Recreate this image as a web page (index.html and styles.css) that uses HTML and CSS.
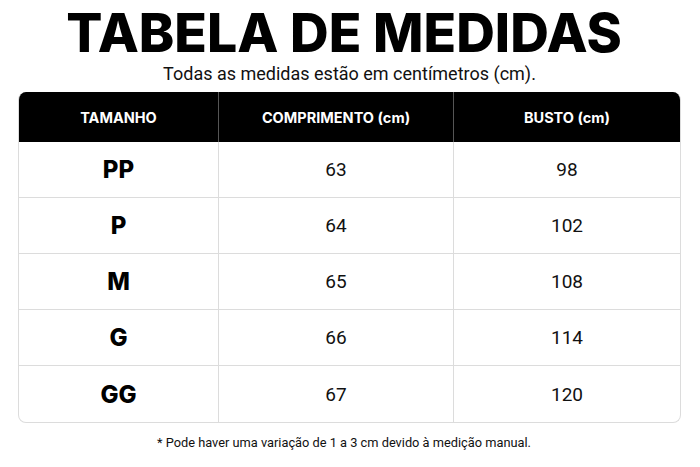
FILE: index.html
```html
<!DOCTYPE html>
<html lang="pt">
<head>
<meta charset="utf-8">
<link rel="stylesheet" href="styles.css">
</head>
<body>
<main class="page">
  <h1 class="title">TABELA DE MEDIDAS</h1>
  <p class="subtitle">Todas as medidas estão em centímetros (cm).</p>
  <div class="table">
    <div class="head">TAMANHO</div>
    <div class="head">COMPRIMENTO (cm)</div>
    <div class="head">BUSTO (cm)</div>

    <div class="cell size">PP</div><div class="cell">63</div><div class="cell">98</div>
    <div class="cell size">P</div><div class="cell">64</div><div class="cell">102</div>
    <div class="cell size">M</div><div class="cell">65</div><div class="cell">108</div>
    <div class="cell size">G</div><div class="cell">66</div><div class="cell">114</div>
    <div class="cell size last">GG</div><div class="cell last">67</div><div class="cell last">120</div>
  </div>
  <p class="note">* Pode haver uma variação de 1 a 3 cm devido à medição manual.</p>
</main>
</body>
</html>
```
FILE: styles.css
```css
html, body {
  margin: 0;
  padding: 0;
  background: #ffffff;
}
.page {
  width: 700px;
  height: 467px;
  padding: 6px 19px 0 18px;
  box-sizing: border-box;
  display: flex;
  flex-direction: column;
  align-items: stretch;
  color: #000;
}
.title {
  margin: 0 11px 0 0;
  font-family: Inter, "Noto Sans", sans-serif;
  font-weight: 800;
  font-size: 53.5px;
  line-height: 54px;
  text-align: center;
  letter-spacing: 0;
}
.subtitle {
  margin: 3px 0 0;
  font-family: Roboto, sans-serif;
  font-size: 18px;
  line-height: 22px;
  text-align: center;
  color: #111;
}
.table {
  margin-top: 7px;
  display: grid;
  grid-template-columns: 200px 235px 1fr;
  grid-template-rows: 50px repeat(5, 56px);
  border: 1px solid #dcdcdc;
  border-top: none;
  border-radius: 8px;
  overflow: hidden;
}
.head {
  background: #000;
  color: #fff;
  font-family: Inter, sans-serif;
  font-weight: 700;
  font-size: 14.5px;
  display: flex;
  align-items: center;
  justify-content: center;
  border-right: 1px solid #555;
}
.head:nth-child(3) { border-right: none; }
.cell {
  display: flex;
  align-items: center;
  justify-content: center;
  font-family: Roboto, sans-serif;
  font-size: 19px;
  color: #111;
  border-bottom: 1px solid #dcdcdc;
  border-right: 1px solid #dcdcdc;
}
.cell:nth-child(3n) { border-right: none; }
.cell.last { border-bottom: none; }
.size {
  font-family: Inter, sans-serif;
  font-weight: 800;
  font-size: 24px;
  color: #000;
}
.note {
  margin: 12px 11px 0 0;
  font-family: Roboto, sans-serif;
  font-size: 12.8px;
  text-align: center;
  color: #111;
}
```
